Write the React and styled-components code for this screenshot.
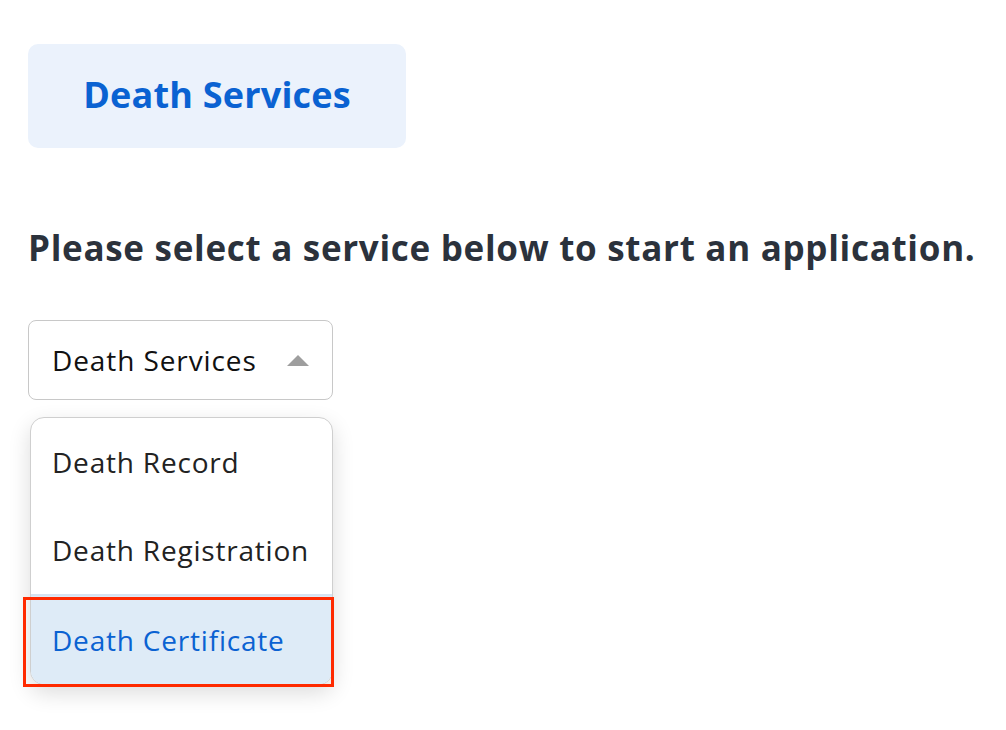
import React from 'react'
import styled, { createGlobalStyle } from 'styled-components'

const GlobalStyle = createGlobalStyle`
  body {
    margin: 0;
    background: #fff;
    font-family: 'Open Sans', 'Lato', sans-serif;
  }
`

const Page = styled.div`
  padding: 44px 28px;
`

const Tab = styled.div`
  width: 378px;
  height: 104px;
  border-radius: 10px;
  background: #ebf2fc;
  display: flex;
  align-items: center;
  justify-content: center;
  padding-bottom: 4px;
  box-sizing: border-box;
  color: #0a62d2;
  font-size: 36px;
  font-weight: 700;
  letter-spacing: 0.2px;
`

const Heading = styled.h2`
  margin: 76px 0 48px;
  font-size: 35px;
  font-weight: 700;
  color: #2b323c;
  line-height: 48px;
  letter-spacing: 0.7px;
  white-space: nowrap;
`

const Select = styled.div`
  box-sizing: border-box;
  width: 305px;
  height: 80px;
  border: 1.5px solid #c8c8c8;
  border-radius: 8px;
  display: flex;
  align-items: center;
  justify-content: space-between;
  padding: 0 23px 0 23px;
  font-size: 28px;
  letter-spacing: 0.9px;
  color: #111;
`

const Caret = styled.span`
  width: 0;
  height: 0;
  border-left: 11px solid transparent;
  border-right: 11px solid transparent;
  border-bottom: 11px solid #9e9e9e;
`

const Menu = styled.ul`
  position: relative;
  box-sizing: border-box;
  list-style: none;
  margin: 17px 0 0 2px;
  padding: 0;
  width: 303px;
  border: 1.5px solid #cfcfcf;
  border-radius: 14px;
  box-shadow: 0 8px 22px rgba(0, 0, 0, 0.14);
  background: #fff;
`

const Item = styled.li`
  height: 88px;
  display: flex;
  align-items: center;
  padding-left: 21px;
  font-size: 28px;
  letter-spacing: 0.8px;
  color: ${p => (p.active ? '#0a62d2' : '#222')};
  background: ${p => (p.active ? '#deebf7' : 'transparent')};
  border-top: ${p => (p.active ? '2px solid #d5e3f1' : 'none')};
  border-radius: ${p => (p.last ? '0 0 13px 13px' : '0')};
  position: relative;
`

const Highlight = styled.span`
  position: absolute;
  left: -8px;
  top: 1px;
  right: -2px;
  bottom: -3px;
  border: 3px solid #ff2a00;
  pointer-events: none;
`

export default function App () {
  return (
    <Page>
      <GlobalStyle />
      <Tab>Death Services</Tab>
      <Heading>Please select a service below to start an application.</Heading>
      <Select>
        <span>Death Services</span>
        <Caret />
      </Select>
      <Menu>
        <Item>Death Record</Item>
        <Item>Death Registration</Item>
        <Item active last>
          Death Certificate
          <Highlight />
        </Item>
      </Menu>
    </Page>
  )
}
